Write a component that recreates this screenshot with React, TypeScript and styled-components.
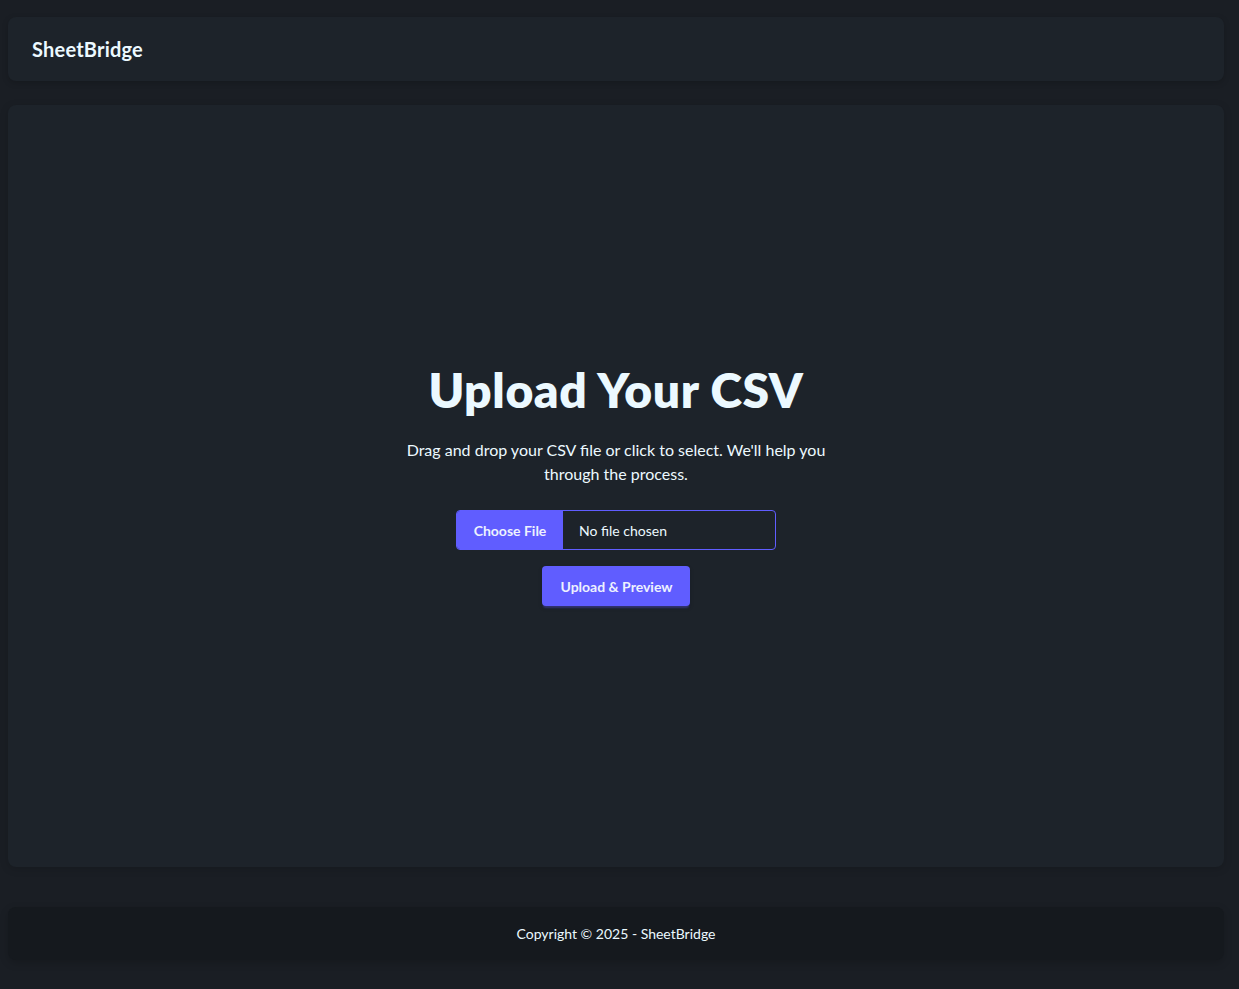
import React from 'react'
import styled, { createGlobalStyle } from 'styled-components'

const GlobalStyle = createGlobalStyle`
  html, body {
    margin: 0;
    padding: 0;
    background: #1a1e24;
    color: #ecf9ff;
    font-family: Lato, "Noto Sans", "Liberation Sans", sans-serif;
  }
  * { box-sizing: border-box; }
`

const Page = styled.div`
  min-height: 100vh;
  display: flex;
  flex-direction: column;
  padding: 17px 15px 29px 8px;
`

const Navbar = styled.header`
  height: 64px;
  display: flex;
  align-items: center;
  padding: 0 24px;
  background: #1d232a;
  border-radius: 8px;
  box-shadow: 0 2px 6px rgba(0, 0, 0, 0.18);
`

const Brand = styled.div`
  font-size: 20px;
  font-weight: 700;
  letter-spacing: 0.2px;
  color: #ecf9ff;
`

const Main = styled.main`
  flex: 1;
  margin-top: 24px;
  background: #1d232a;
  border-radius: 8px;
  box-shadow: 0 2px 8px rgba(0, 0, 0, 0.15);
  display: flex;
  align-items: center;
  justify-content: center;
`

const Hero = styled.div`
  display: flex;
  flex-direction: column;
  align-items: center;
  text-align: center;
  max-width: 448px;
`

const Title = styled.h1`
  margin: 0;
  font-size: 48px;
  line-height: 1;
  font-weight: 800;
  letter-spacing: 0.6px;
  color: #ecf9ff;
`

const Lead = styled.p`
  margin: 24px 0 0;
  font-size: 16px;
  line-height: 24px;
  color: #ecf9ff;
`

const UploadForm = styled.form`
  margin-top: 24px;
  display: flex;
  flex-direction: column;
  align-items: center;
  gap: 16px;
`

const FilePicker = styled.label`
  width: 320px;
  height: 40px;
  display: flex;
  align-items: stretch;
  border: 1px solid #605dff;
  border-radius: 4px;
  overflow: hidden;
  cursor: pointer;
  background: #1d232a;

  input { display: none; }
`

const PickerButton = styled.span`
  width: 106px;
  display: flex;
  align-items: center;
  justify-content: center;
  background: #605dff;
  color: #edf1fe;
  font-size: 14px;
  font-weight: 700;
`

const PickerText = styled.span`
  display: flex;
  align-items: center;
  padding-left: 16px;
  font-size: 14px;
  color: #ecf9ff;
`

const PrimaryButton = styled.button`
  height: 40px;
  padding: 0 17px 0 18px;
  border: none;
  border-radius: 4px;
  background: #605dff;
  color: #edf1fe;
  font-family: inherit;
  font-size: 14px;
  font-weight: 700;
  cursor: pointer;
  box-shadow: 0 3px 2px -1px rgba(96, 93, 255, 0.35), 0 2px 4px rgba(0, 0, 0, 0.2);
`

const Footer = styled.footer`
  margin-top: 40px;
  height: 53px;
  display: flex;
  align-items: center;
  justify-content: center;
  background: #15191e;
  border-radius: 8px;
  box-shadow: 0 3px 8px rgba(0, 0, 0, 0.18);
  font-size: 14px;
  color: #ecf9ff;
`

export default function App() {
  return (
    <>
      <GlobalStyle />
      <Page>
        <Navbar>
          <Brand>SheetBridge</Brand>
        </Navbar>
        <Main>
          <Hero>
            <Title>Upload Your CSV</Title>
            <Lead>
              Drag and drop your CSV file or click to select. We'll help you through the process.
            </Lead>
            <UploadForm onSubmit={(e) => e.preventDefault()}>
              <FilePicker>
                <input type="file" accept=".csv" />
                <PickerButton>Choose File</PickerButton>
                <PickerText>No file chosen</PickerText>
              </FilePicker>
              <PrimaryButton type="submit">Upload &amp; Preview</PrimaryButton>
            </UploadForm>
          </Hero>
        </Main>
        <Footer>Copyright © 2025 - SheetBridge</Footer>
      </Page>
    </>
  )
}
